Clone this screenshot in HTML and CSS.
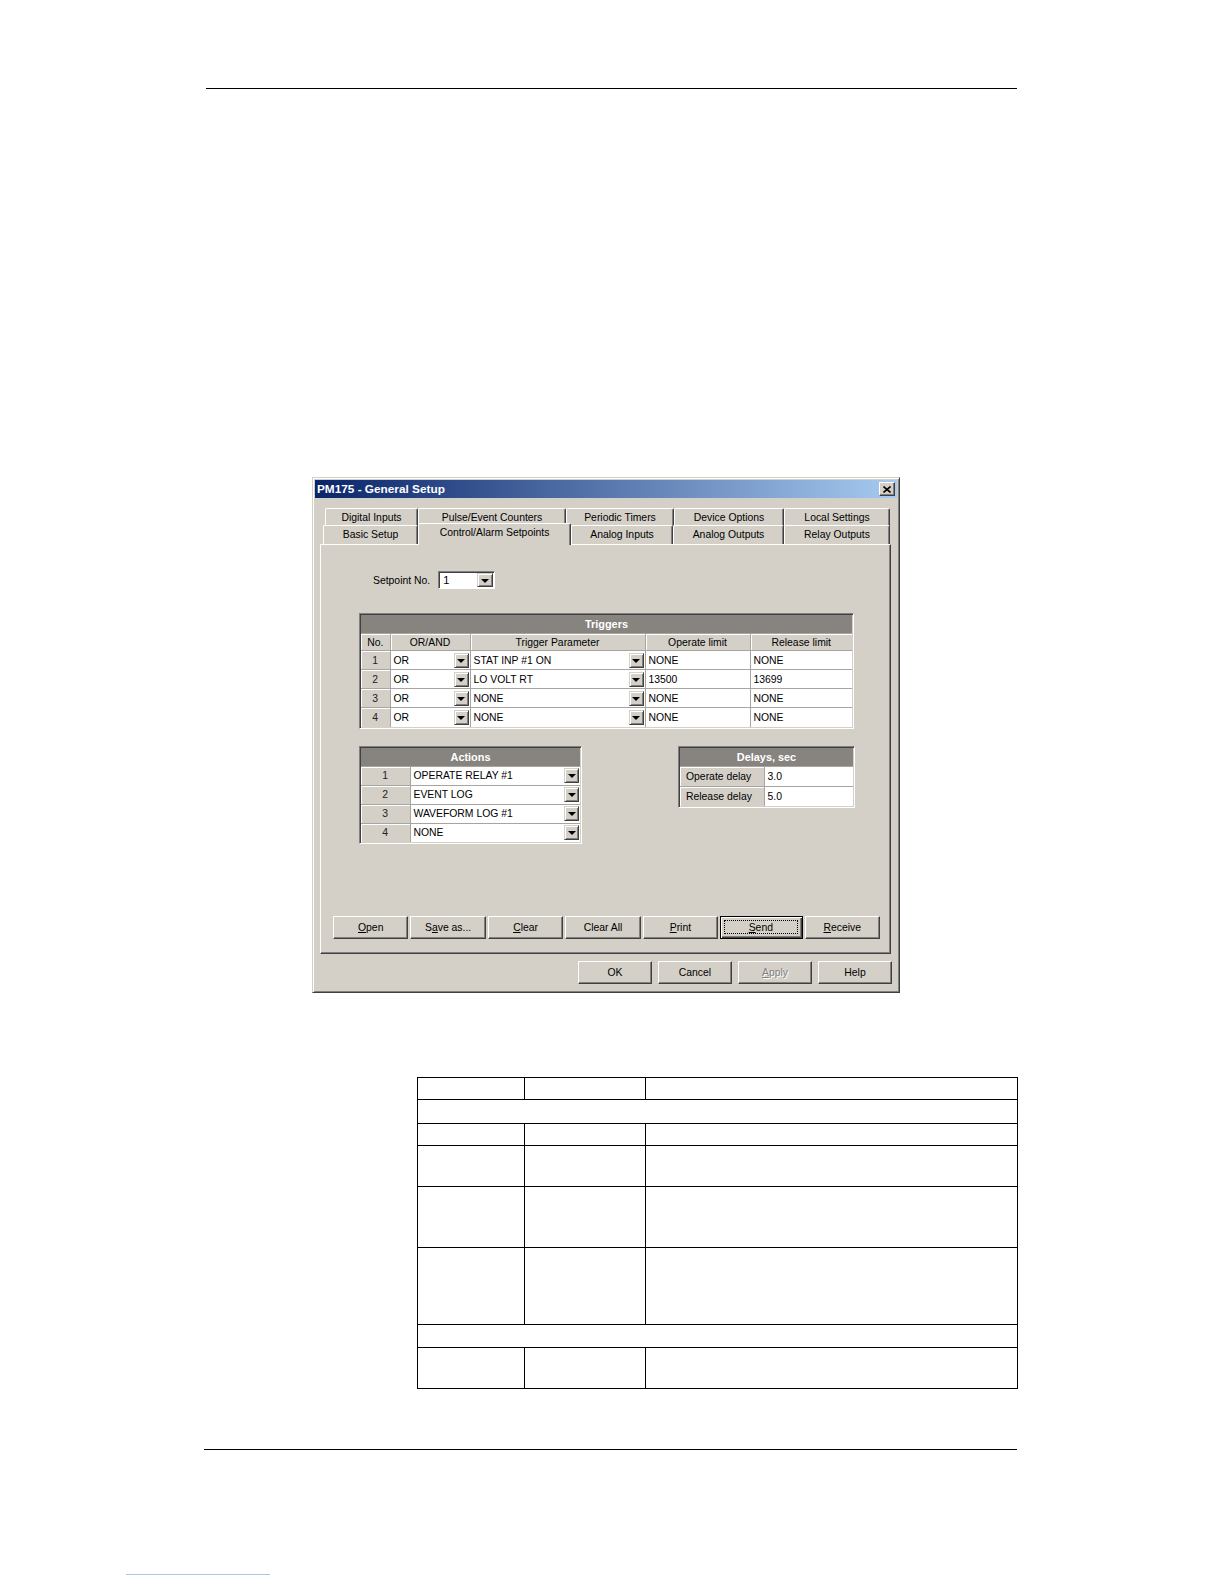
FILE: index.html
```html
<!DOCTYPE html>
<html>
<head>
<meta charset="utf-8">
<title>PM175 - General Setup</title>
<link rel="stylesheet" href="styles.css">
</head>
<body>
<div class="page">
  <div class="rule top-rule"></div>

  <div class="dialog">
    <div class="titlebar">
      <span class="title">PM175 - General Setup</span>
      <span class="close"><svg width="8" height="7" viewBox="0 0 8 7"><path d="M0.5 0.5 L7.5 6.5 M7.5 0.5 L0.5 6.5" stroke="#000" stroke-width="1.6" fill="none"/></svg></span>
    </div>

    <div class="tabs">
      <div class="tabrow back">
        <div class="tab">Digital Inputs</div>
        <div class="tab">Pulse/Event Counters</div>
        <div class="tab">Periodic Timers</div>
        <div class="tab">Device Options</div>
        <div class="tab">Local Settings</div>
      </div>
      <div class="tabrow front">
        <div class="tab">Basic Setup</div>
        <div class="tab active">Control/Alarm Setpoints</div>
        <div class="tab">Analog Inputs</div>
        <div class="tab">Analog Outputs</div>
        <div class="tab">Relay Outputs</div>
      </div>
    </div>

    <div class="panel">
      <div class="setpoint">
        <span class="sp-label">Setpoint No.</span>
        <div class="combo sp"><span>1</span><span class="ddbtn"></span></div>
      </div>

      <div class="gbox triggers-box">
        <div class="ghead">Triggers</div>
        <table class="gtable">
          <colgroup><col class="t-no"><col class="t-or"><col class="t-par"><col class="t-op"><col class="t-rel"></colgroup>
          <tr class="hrow"><td class="hcell">No.</td><td class="hcell">OR/AND</td><td class="hcell">Trigger Parameter</td><td class="hcell">Operate limit</td><td class="hcell">Release limit</td></tr>
          <tr><td class="num">1</td><td class="val"><div class="cc"><span>OR</span><span class="ddbtn"></span></div></td><td class="val"><div class="cc"><span>STAT INP #1 ON</span><span class="ddbtn"></span></div></td><td class="val">NONE</td><td class="val">NONE</td></tr>
          <tr><td class="num">2</td><td class="val"><div class="cc"><span>OR</span><span class="ddbtn"></span></div></td><td class="val"><div class="cc"><span>LO VOLT RT</span><span class="ddbtn"></span></div></td><td class="val">13500</td><td class="val">13699</td></tr>
          <tr><td class="num">3</td><td class="val"><div class="cc"><span>OR</span><span class="ddbtn"></span></div></td><td class="val"><div class="cc"><span>NONE</span><span class="ddbtn"></span></div></td><td class="val">NONE</td><td class="val">NONE</td></tr>
          <tr><td class="num">4</td><td class="val"><div class="cc"><span>OR</span><span class="ddbtn"></span></div></td><td class="val"><div class="cc"><span>NONE</span><span class="ddbtn"></span></div></td><td class="val">NONE</td><td class="val">NONE</td></tr>
        </table>
      </div>

      <div class="lower">
        <div class="gbox actions-box">
          <div class="ghead">Actions</div>
          <table class="gtable">
            <colgroup><col class="a-no"><col class="a-val"></colgroup>
            <tr><td class="num">1</td><td class="val"><div class="cc"><span>OPERATE RELAY #1</span><span class="ddbtn"></span></div></td></tr>
            <tr><td class="num">2</td><td class="val"><div class="cc"><span>EVENT LOG</span><span class="ddbtn"></span></div></td></tr>
            <tr><td class="num">3</td><td class="val"><div class="cc"><span>WAVEFORM LOG #1</span><span class="ddbtn"></span></div></td></tr>
            <tr><td class="num">4</td><td class="val"><div class="cc"><span>NONE</span><span class="ddbtn"></span></div></td></tr>
          </table>
        </div>
        <div class="gbox delays-box">
          <div class="ghead">Delays, sec</div>
          <table class="gtable">
            <colgroup><col class="d-lab"><col class="d-val"></colgroup>
            <tr class="drow"><td class="lab">Operate delay</td><td class="val">3.0</td></tr>
            <tr class="drow"><td class="lab">Release delay</td><td class="val">5.0</td></tr>
          </table>
        </div>
      </div>

      <div class="btnrow">
        <div class="btn"><u>O</u>pen</div>
        <div class="btn">S<u>a</u>ve as...</div>
        <div class="btn"><u>C</u>lear</div>
        <div class="btn">Clear All</div>
        <div class="btn"><u>P</u>rint</div>
        <div class="btn default"><span class="focus"><u>S</u>end</span></div>
        <div class="btn"><u>R</u>eceive</div>
      </div>
    </div>

    <div class="okrow">
      <div class="btn">OK</div>
      <div class="btn">Cancel</div>
      <div class="btn disabled"><u>A</u>pply</div>
      <div class="btn">Help</div>
    </div>
  </div>

  <table class="doc">
    <colgroup><col class="doc-c1"><col class="doc-c2"><col class="doc-c3"></colgroup>
    <tr class="r22"><td></td><td></td><td></td></tr>
    <tr class="r24"><td colspan="3"></td></tr>
    <tr class="r22"><td></td><td></td><td></td></tr>
    <tr class="r41 g"><td></td><td></td><td></td></tr>
    <tr class="r61 g"><td></td><td></td><td></td></tr>
    <tr class="r77 g"><td></td><td></td><td></td></tr>
    <tr class="r23"><td colspan="3"></td></tr>
    <tr class="r41"><td></td><td></td><td></td></tr>
  </table>

  <div class="rule bottom-rule"></div>
  <div class="link-line"></div>
</div>
</body>
</html>
```

FILE: styles.css
```css
* { box-sizing: border-box; }

body {
  margin: 0;
  background: #fff;
  font-family: "Liberation Sans", Arial, sans-serif;
}

.page {
  width: 1224px;
  padding-top: 88px;
}

.rule {
  height: 1px;
  background: #000;
}

.top-rule {
  margin-left: 206px;
  width: 811px;
}

/* ---------- dialog ---------- */
.dialog {
  margin: 388px 0 0 312px;
  width: 588px;
  height: 516px;
  background: #d4d0c8;
  border: 1px solid;
  border-color: #d4d0c8 #404040 #404040 #d4d0c8;
  box-shadow: inset 1px 1px 0 #fff, inset -1px -1px 0 #808080;
  padding: 2px;
  display: flex;
  flex-direction: column;
  font-size: 10.4px;
  color: #000;
}

.titlebar {
  height: 18px;
  flex: none;
  background: linear-gradient(to right, #0a246a, #a6caf0);
  display: flex;
  align-items: center;
  justify-content: space-between;
  padding: 0 2px 0 2px;
}

.title {
  color: #fff;
  font-weight: bold;
  font-size: 11.8px;
}

.close {
  width: 16px;
  height: 14px;
  background: #d4d0c8;
  border: 1px solid;
  border-color: #fff #404040 #404040 #fff;
  box-shadow: inset -1px -1px 0 #808080;
  display: flex;
  align-items: center;
  justify-content: center;
}

.close svg { display: block; }

/* ---------- tabs ---------- */
.tabs {
  margin-top: 10px;
  height: 36px;
  flex: none;
}

.tabrow { display: grid; }

.back {
  margin-left: 10px;
  height: 17px;
  grid-template-columns: 93px 148px 108px 110px 106px;
}

.front {
  margin-left: 8px;
  height: 19px;
  grid-template-columns: 95px 153px 102px 111px 106px;
}

.tab {
  background: #d4d0c8;
  border-top: 1px solid #fff;
  border-left: 1px solid #fff;
  border-right: 1px solid #404040;
  box-shadow: inset -1px 0 0 #808080;
  border-radius: 2px 2px 0 0;
  text-align: center;
  line-height: 17px;
  white-space: nowrap;
}

.front .tab { line-height: 18px; }

.tab.active {
  position: relative;
  z-index: 1;
  margin-top: -2px;
  height: 22px;
  line-height: 17px;
}

/* ---------- panel ---------- */
.panel {
  margin-left: 5px;
  width: 571px;
  height: 410px;
  flex: none;
  border: 1px solid;
  border-color: #fff #404040 #404040 #fff;
  box-shadow: inset -1px -1px 0 #808080;
  display: flex;
  flex-direction: column;
  padding-bottom: 14px;
}

.setpoint {
  margin: 26px 0 0 52px;
  display: flex;
  align-items: center;
  gap: 8px;
}

.combo {
  background: #fff;
  border: 1px solid;
  border-color: #808080 #fff #fff #808080;
  box-shadow: inset 1px 1px 0 #404040;
  display: flex;
  align-items: center;
  justify-content: space-between;
}

.sp {
  width: 57px;
  height: 18px;
  padding: 1px 1px 1px 4px;
  font-size: 11px;
}

.ddbtn {
  width: 16px;
  height: 14px;
  flex: none;
  background: #d4d0c8;
  border: 1px solid;
  border-color: #d4d0c8 #404040 #404040 #d4d0c8;
  box-shadow: inset 1px 1px 0 #fff, inset -1px -1px 0 #808080;
  display: flex;
  align-items: center;
  justify-content: center;
}

.ddbtn::after {
  content: "";
  border-left: 4px solid transparent;
  border-right: 4px solid transparent;
  border-top: 4px solid #000;
  margin-top: 1px;
}

/* ---------- grids ---------- */
.gbox {
  border: 1px solid;
  border-color: #808080 #fff #fff #808080;
  padding: 1px;
  box-shadow: inset 1px 1px 0 #404040;
}

.triggers-box {
  margin: 24px 0 0 38px;
  width: 495px;
}

.ghead {
  height: 18px;
  background: #87837f;
  color: #fff;
  font-weight: bold;
  font-size: 10.9px;
  text-align: center;
  line-height: 18px;
}

.gtable {
  border-collapse: collapse;
  table-layout: fixed;
  width: 100%;
}

.gtable td {
  border: 1px solid #a8a4a0;
  padding: 0;
  height: 19px;
  white-space: nowrap;
  overflow: hidden;
}

.gtable tr td:first-child { border-left: none; }
.gtable tr td:last-child { border-right: none; }
.gtable tr:last-child td { border-bottom: none; }

.gtable .hrow td { height: 17px; }

.t-no { width: 29px; }
.t-or { width: 80px; }
.t-par { width: 175px; }
.t-op { width: 105px; }
.t-rel { width: 102px; }

.hcell, .num, .lab {
  background: #d4d0c8;
  box-shadow: inset 1px 1px 0 #fff;
}

.hcell, .num { text-align: center; }

.num { color: #222; }

.lab { padding-left: 6px !important; }

.val {
  background: #fff;
  padding-left: 3px !important;
}

.cc {
  display: flex;
  align-items: center;
  justify-content: space-between;
  padding-right: 1px;
}

.cc .ddbtn {
  width: 15px;
  height: 15px;
}

.lower {
  margin: 17px 0 0 38px;
  display: flex;
  align-items: flex-start;
}

.actions-box { width: 223px; }
.a-no { width: 49px; }
.a-val { width: 170px; }

.delays-box {
  width: 177px;
  margin-left: 96px;
}
.d-lab { width: 84px; }
.d-val { width: 89px; }
.gtable .drow td { height: 20px; }

/* ---------- buttons ---------- */
.btnrow {
  margin: auto 0 0 12px;
  width: 547px;
  display: flex;
  gap: 2px;
}

.btn {
  flex: 1;
  height: 23px;
  background: #d4d0c8;
  border: 1px solid;
  border-color: #fff #404040 #404040 #fff;
  box-shadow: inset -1px -1px 0 #808080;
  display: flex;
  align-items: center;
  justify-content: center;
  white-space: nowrap;
}

.btn.default {
  border-color: #000;
  box-shadow: inset 1px 1px 0 #fff, inset -1px -1px 0 #404040, inset -2px -2px 0 #808080;
  padding: 3px 4px 4px 3px;
}

.focus {
  flex: 1;
  align-self: stretch;
  border: 1px dotted #000;
  display: flex;
  align-items: center;
  justify-content: center;
}

.btn.disabled {
  color: #808080;
  text-shadow: 1px 1px 0 #fff;
}

.okrow {
  margin-top: 7px;
  display: flex;
  justify-content: flex-end;
  gap: 6px;
  padding-right: 5px;
}

.okrow .btn {
  flex: none;
  width: 74px;
}

/* ---------- document table ---------- */
.doc {
  margin: 84px 0 0 417px;
  width: 600px;
  border-collapse: collapse;
  table-layout: fixed;
}

.doc td {
  border: 1px solid #000;
  padding: 0;
}

.doc tr.g td { border-top-color: #8a8a8a; }

.doc-c1 { width: 107px; }
.doc-c2 { width: 121px; }
.doc-c3 { width: 372px; }

.r22 td { height: 22px; }
.r23 td { height: 23px; }
.r24 td { height: 24px; }
.r41 td { height: 41px; }
.r61 td { height: 61px; }
.r77 td { height: 77px; }

.bottom-rule {
  margin: 60px 0 0 204px;
  width: 813px;
}

.link-line {
  margin: 124px 0 0 126px;
  width: 144px;
  height: 1px;
  background: #b4c2ee;
}
```
